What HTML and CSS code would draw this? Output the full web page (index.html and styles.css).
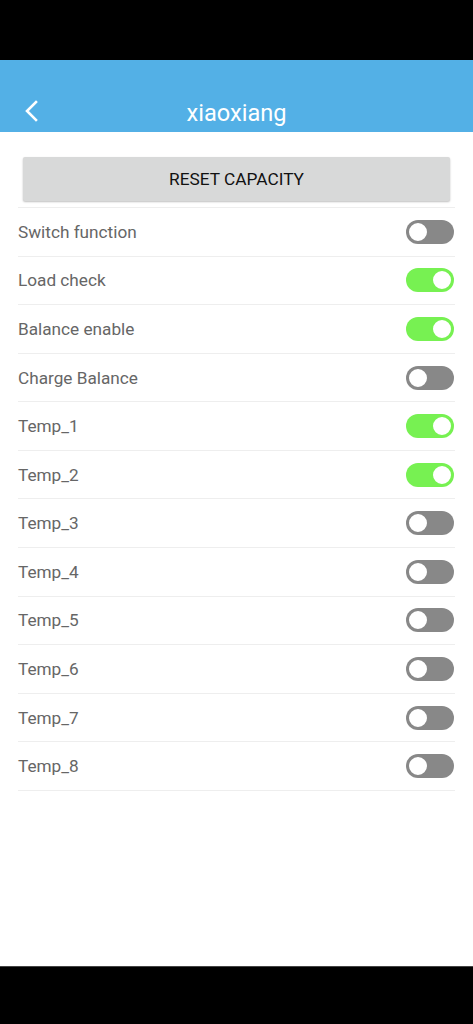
FILE: index.html
```html
<!DOCTYPE html>
<html>
<head>
<meta charset="utf-8">
<link rel="stylesheet" href="styles.css">
</head>
<body>
<div class="screen">
  <div class="statusbar"></div>
  <header class="appbar">
    <svg class="back" width="16" height="22" viewBox="0 0 16 22"><path d="M13 2 L4 11 L13 20" fill="none" stroke="#fff" stroke-width="2.6" stroke-linecap="square"/></svg>
    <h1 class="title">xiaoxiang</h1>
  </header>
  <main class="content">
    <div class="btn-wrap"><button class="reset">RESET CAPACITY</button></div>
    <ul class="list">
      <li class="row"><span>Switch function</span><span class="toggle"></span></li>
      <li class="row"><span>Load check</span><span class="toggle on"></span></li>
      <li class="row"><span>Balance enable</span><span class="toggle on"></span></li>
      <li class="row"><span>Charge Balance</span><span class="toggle"></span></li>
      <li class="row"><span>Temp_1</span><span class="toggle on"></span></li>
      <li class="row"><span>Temp_2</span><span class="toggle on"></span></li>
      <li class="row"><span>Temp_3</span><span class="toggle"></span></li>
      <li class="row"><span>Temp_4</span><span class="toggle"></span></li>
      <li class="row"><span>Temp_5</span><span class="toggle"></span></li>
      <li class="row"><span>Temp_6</span><span class="toggle"></span></li>
      <li class="row"><span>Temp_7</span><span class="toggle"></span></li>
      <li class="row"><span>Temp_8</span><span class="toggle"></span></li>
    </ul>
  </main>
  <div class="navbar"></div>
</div>
</body>
</html>
```

FILE: styles.css
```css
* { box-sizing: border-box; }
html, body { margin: 0; padding: 0; }
body { font-family: Roboto, "Noto Sans", sans-serif; background: #fff; }
.screen { width: 473px; height: 1024px; display: flex; flex-direction: column; overflow: hidden; }
.statusbar { height: 60px; background: #000; flex: none; }
.appbar { height: 72px; background: #53b0e6; flex: none; position: relative; display: flex; align-items: flex-end; justify-content: center; padding-bottom: 5px; }
.back { position: absolute; left: 23px; top: 40px; }
.title { margin: 0; font-weight: 400; font-size: 23.6px; color: #fff; line-height: 28px; }
.content { flex: 1; padding: 25px 18px 0 18px; }
.btn-wrap { padding: 0 5px 0 5px; height: 50px; }
.reset { width: 100%; height: 44px; border: none; border-radius: 2px; background: #d8d9d9; box-shadow: 0 1px 2px rgba(0,0,0,0.25); font-family: Roboto, sans-serif; font-size: 17.3px; font-weight: 400; color: #111; padding: 0; }
.list { list-style: none; margin: 0; padding: 0; border-top: 1px solid #eeeeee; }
.row { height: 48.58px; border-bottom: 1px solid #eeeeee; display: flex; align-items: center; justify-content: space-between; font-size: 17.2px; color: #666; padding-right: 1px; }
.toggle { width: 48px; height: 24px; border-radius: 12px; background: #888888; position: relative; flex: none; }
.toggle::after { content: ""; position: absolute; left: 1px; top: 1px; width: 22px; height: 22px; border-radius: 50%; background: #fff; border: 2px solid #888888; box-sizing: border-box; }
.toggle.on { background: #77f152; }
.toggle.on::after { left: auto; right: 1px; border-color: #77f152; }
.navbar { height: 58px; background: #000; border-top: 1px solid #444; flex: none; }
```
